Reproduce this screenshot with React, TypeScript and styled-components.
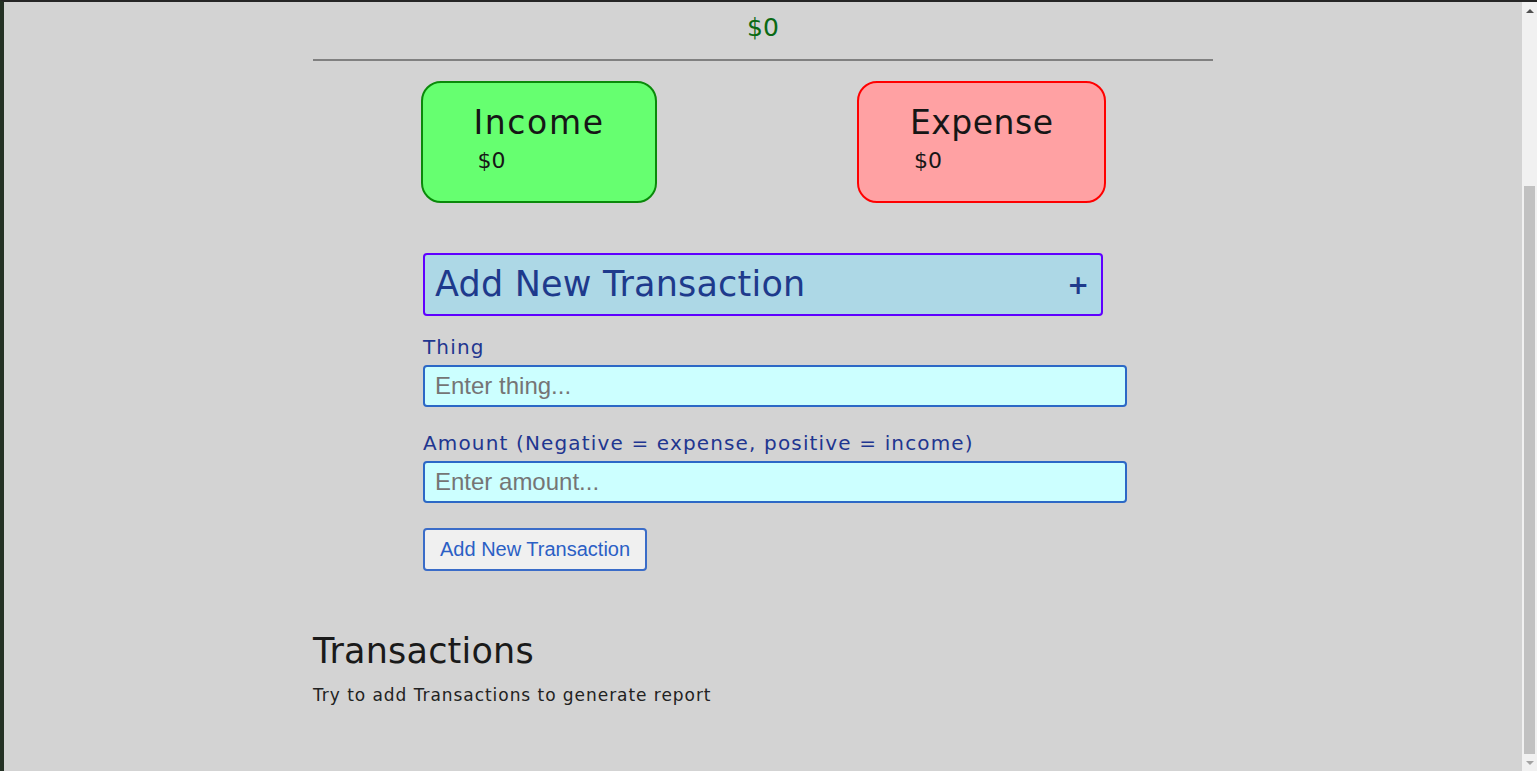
import React, { useLayoutEffect, useRef, useState } from "react";
import styled, { createGlobalStyle } from "styled-components";

const Global = createGlobalStyle`
  html, body { margin: 0; padding: 0; height: 100%; overflow: hidden; background: #263226; }
  #root { height: 100%; }
  * { box-sizing: content-box; }
`;

const Frame = styled.div`
  display: flex;
  height: 100vh;
  box-sizing: border-box;
  border-top: 2px solid #252525;
  border-left: 4px solid #243124;
`;

const Scroller = styled.div`
  position: relative;
  flex: 1;
  overflow: hidden;
  background: #d3d3d3;
  font-family: "DejaVu Sans", sans-serif;
`;

const ScrollBar = styled.div`
  display: flex;
  flex-direction: column;
  width: 15px;
  flex: none;
  background: #f1f1f1;
`;

const ArrowButton = styled.div`
  display: flex;
  align-items: center;
  justify-content: center;
  height: 17px;
  flex: none;
`;

const Triangle = styled.span<{ $dir: "up" | "down" }>`
  width: 0;
  height: 0;
  border-left: 4px solid transparent;
  border-right: 4px solid transparent;
  ${(p) =>
    p.$dir === "up"
      ? "border-bottom: 4px solid #505050;"
      : "border-top: 4px solid #a3a3a3;"}
`;

const Track = styled.div`
  position: relative;
  flex: 1;
`;

const Thumb = styled.div`
  position: absolute;
  left: 2px;
  right: 2px;
  background: #c1c1c1;
`;

const Container = styled.div`
  width: 900px;
  margin: 0 auto;
  padding-bottom: 66px;
`;

const Header = styled.header`
  padding-top: 40px;
  text-align: center;
`;

const Title = styled.h1`
  margin: 0 0 60px;
  font-size: 40px;
  line-height: 48px;
  font-weight: 400;
  color: #1a1a1a;
`;

const BalanceLabel = styled.h3`
  margin: 0 0 62px;
  font-size: 22px;
  line-height: 28px;
  font-weight: 400;
  color: #1a1a1a;
`;

const Balance = styled.div`
  text-align: center;
  font-size: 25px;
  line-height: 28px;
  color: #0a6a14;
`;

const Rule = styled.hr`
  margin: 17px 0 0;
  border: none;
  border-top: 2px solid #808080;
  height: 0;
`;

const CardRow = styled.div`
  display: flex;
  justify-content: space-between;
  width: 685px;
  margin: 20px auto 0;
`;

const Card = styled.div<{ $kind: "income" | "expense" }>`
  display: flex;
  flex-direction: column;
  padding: 21px 50px 27px 51px;
  border-radius: 20px;
  border: 2px solid ${(p) => (p.$kind === "income" ? "#0a8a0a" : "#ff0000")};
  background: ${(p) => (p.$kind === "income" ? "#66ff70" : "#ffa1a3")};
  color: #161616;
`;

const CardTitle = styled.div<{ $spacing: number }>`
  font-size: 33px;
  line-height: 38px;
  letter-spacing: ${(p) => p.$spacing}px;
`;

const CardAmount = styled.div`
  margin-top: 6px;
  padding-left: 4px;
  font-size: 22px;
  line-height: 26px;
`;

const Panel = styled.section`
  width: 680px;
  margin: 50px auto 0;
`;

const AccordionHead = styled.div`
  display: flex;
  align-items: center;
  justify-content: space-between;
  box-sizing: border-box;
  height: 63px;
  padding: 0 12px 0 10px;
  border: 2px solid #6000ff;
  border-radius: 4px;
  background: #add8e6;
  color: #1e3a8c;
`;

const AccordionTitle = styled.span`
  font-size: 35px;
  line-height: 41px;
  letter-spacing: 0.2px;
`;

const Plus = styled.span`
  font-size: 26px;
  font-weight: 700;
  line-height: 28px;
`;

const Field = styled.div<{ $first?: boolean }>`
  display: flex;
  flex-direction: column;
  margin-top: ${(p) => (p.$first ? "19px" : "24px")};
`;

const Label = styled.label`
  font-size: 20px;
  line-height: 24px;
  letter-spacing: 1.15px;
  color: #1f3690;
  margin-bottom: 6px;
`;

const Input = styled.input`
  width: 100%;
  padding: 5px 10px;
  margin: 0;
  border: 2px solid #2c68c6;
  border-radius: 4px;
  background: #ccffff;
  font-family: "Liberation Sans", Arial, sans-serif;
  font-size: 24px;
  line-height: normal;
  color: #222;
  outline: none;
  &::placeholder { color: #757575; }
`;

const SubmitButton = styled.button`
  align-self: flex-start;
  margin-top: 25px;
  padding: 8px 15px;
  border: 2px solid #3a6cc8;
  border-radius: 4px;
  background: #f0f0f0;
  color: #2b5fc5;
  font-family: "Liberation Sans", Arial, sans-serif;
  font-size: 20px;
  line-height: 23px;
  cursor: pointer;
`;

const Form = styled.form`
  display: flex;
  flex-direction: column;
`;

const History = styled.section`
  margin-top: 60px;
`;

const HistoryTitle = styled.h2`
  margin: 0;
  font-size: 35px;
  line-height: 40px;
  letter-spacing: 0.2px;
  font-weight: 400;
  color: #1a1a1a;
`;

const Empty = styled.p`
  margin: 14px 0 0;
  font-size: 17px;
  line-height: 20px;
  letter-spacing: 0.95px;
  color: #222;
`;

export default function App() {
  const scrollRef = useRef<HTMLDivElement>(null);
  const balanceRef = useRef<HTMLDivElement>(null);
  const trackRef = useRef<HTMLDivElement>(null);
  const [thumb, setThumb] = useState({ top: 169, height: 568 });

  useLayoutEffect(() => {
    const s = scrollRef.current;
    const b = balanceRef.current;
    const t = trackRef.current;
    if (s && b) {
      s.scrollTop = b.offsetTop - 12;
      if (t) {
        const trackH = t.clientHeight;
        const ratio = s.clientHeight / s.scrollHeight;
        setThumb({
          top: Math.round((s.scrollTop / s.scrollHeight) * trackH),
          height: Math.round(ratio * trackH),
        });
      }
    }
  }, []);

  return (
    <>
      <Global />
      <Frame>
        <Scroller ref={scrollRef}>
          <Container>
            <Header>
              <Title>Expense Tracker</Title>
              <BalanceLabel>Your Balance</BalanceLabel>
            </Header>
            <Balance ref={balanceRef}>$0</Balance>
            <Rule />
            <CardRow>
              <Card $kind="income">
                <CardTitle $spacing={1.6}>Income</CardTitle>
                <CardAmount>$0</CardAmount>
              </Card>
              <Card $kind="expense">
                <CardTitle $spacing={0.5}>Expense</CardTitle>
                <CardAmount>$0</CardAmount>
              </Card>
            </CardRow>
            <Panel>
              <AccordionHead>
                <AccordionTitle>Add New Transaction</AccordionTitle>
                <Plus>+</Plus>
              </AccordionHead>
              <Form onSubmit={(e) => e.preventDefault()}>
                <Field $first>
                  <Label htmlFor="thing">Thing</Label>
                  <Input id="thing" type="text" placeholder="Enter thing..." />
                </Field>
                <Field>
                  <Label htmlFor="amount">Amount (Negative = expense, positive = income)</Label>
                  <Input id="amount" type="text" placeholder="Enter amount..." />
                </Field>
                <SubmitButton type="submit">Add New Transaction</SubmitButton>
              </Form>
            </Panel>
            <History>
              <HistoryTitle>Transactions</HistoryTitle>
              <Empty>Try to add Transactions to generate report</Empty>
            </History>
          </Container>
        </Scroller>
        <ScrollBar>
          <ArrowButton>
            <Triangle $dir="up" />
          </ArrowButton>
          <Track ref={trackRef}>
            <Thumb style={{ top: thumb.top, height: thumb.height }} />
          </Track>
          <ArrowButton>
            <Triangle $dir="down" />
          </ArrowButton>
        </ScrollBar>
      </Frame>
    </>
  );
}
